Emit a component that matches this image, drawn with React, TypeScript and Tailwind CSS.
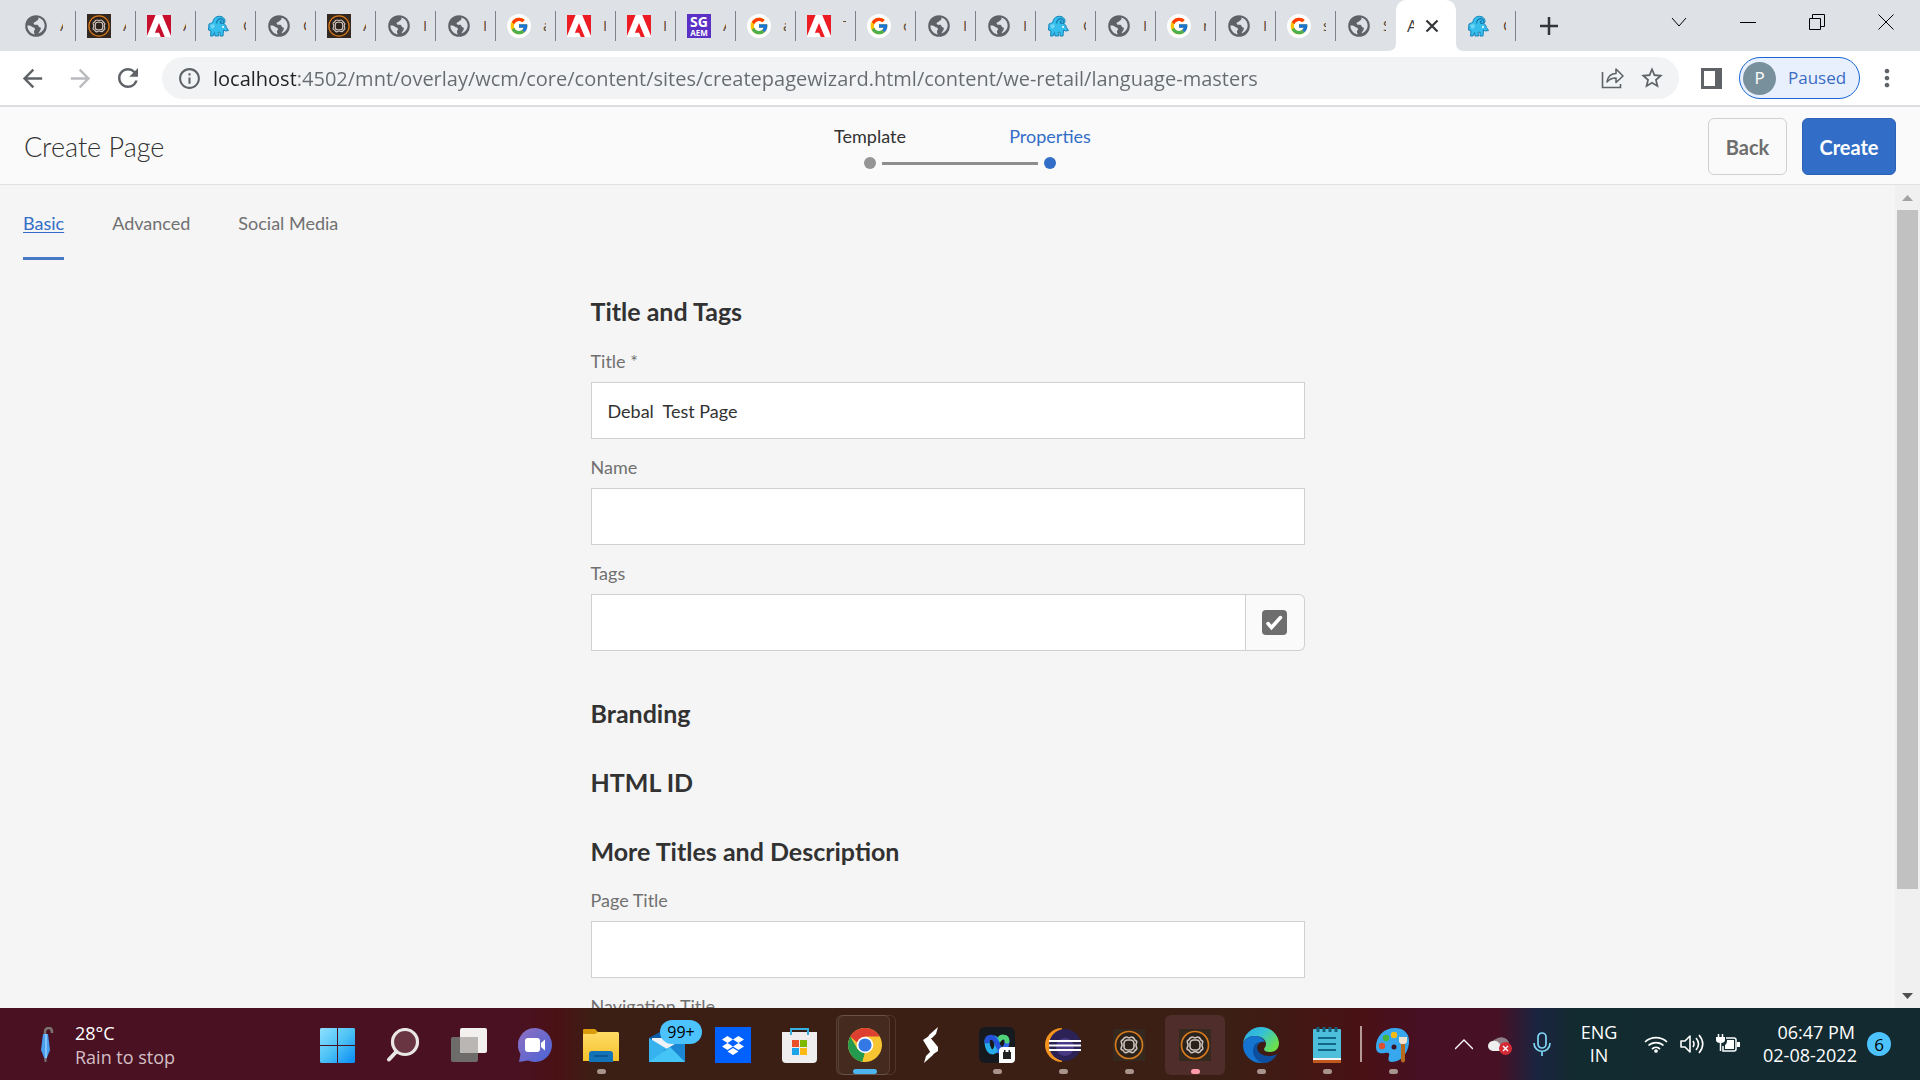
import React, { useState } from "react";
import { FcGoogle } from "react-icons/fc";
import { MdArrowBack, MdArrowForward, MdRefresh, MdInfoOutline, MdStarBorder, MdMoreVert } from "react-icons/md";

const Globe = () => (
  <svg viewBox="0 0 24 24" className="size-6">
    <circle cx="12" cy="12" r="10.800" fill="#5f6368" />
    <path
      d="M14 3.600c1 1.200.6 2.400-.8 2.800-1.300.4-1.400 1.600-2.700 1.900-1.200.3-1 1.700-.2 2.100 1 .5 2.600-.1 3.600.6 1 .8.4 2.100 1.800 2.300 1.500.2 1.300 1.700.6 2.900-.6 1.100-1.500 1.600-1.700 3.200 4-1.400 6.300-4.700 6-8.300-.2-3.700-2.800-6.600-6.600-7.500z"
      fill="#dee1e6"
    />
    <path d="M3.400 11.600c1.700-.3 3.500.2 4.600 1.200.9.900 2.600.7 2.900 2 .3 1.400-1 1.700-1 3 0 .9.600 1.400.7 2.600-4.200-.6-7.200-4.300-7.200-8.800z" fill="#dee1e6" />
  </svg>
);

const AdobeMark = ({ color }: { color: string }) => (
  <svg viewBox="0 0 24 24" className="size-6">
    <rect width="24" height="22" y="1" fill="#fff" />
    <path d="M0 1h8.6L0 22zM15.2 1H24v21zM12 9l5.8 14h-4l-1.700-4.300H7.900z" fill={color} />
  </svg>
);

const Knot = () => (
  <svg viewBox="0 0 32 32" className="size-full">
    <rect width="32" height="32" fill="#35291f" />
    <circle cx="16" cy="16" r="13.500" fill="#2b211b" stroke="#d5791d" strokeWidth="1.700" />
    <g fill="none" stroke="#cfc5be" strokeWidth="1.600">
      <rect x="11" y="11" width="10" height="10" rx="3.500" />
      <path d="M12 8.500c2-1.500 2.500.5 4 .5s2-2 4-.5 1 2 2.500 3 2 .5 1 2.500-1 1.500 0 4 .5 2-1 3-.5 2-2.500 2.500-2.500-1-4-1-2 2-4 1-1-2-2.500-2.500-2-1-1-3 1-1.500 0-4-.5-2 1-3 .5-1.500 2.500-2.500z" />
    </g>
  </svg>
);

const Elephant = () => (
  <svg viewBox="0 0 24 24" className="size-6">
    <path
      d="M2 10c2-1 3-1 4-2 0-4 4-6.500 8-5.500s5 5 3 7c1 1 2 2 2.500 4l2 3-3 .5-2-1-.5 6h-3v-4l-2 .5.500 3.500h-3.500l-.5-3.500L6 22H3.500l.5-5-2.500-1z"
      fill="#35bdec"
      stroke="#1684b8"
      strokeWidth="1"
      strokeLinejoin="round"
    />
    <path d="M9.500 9.500c0-3.500 3-5.500 5.500-4.500s2.500 4.500 0 4.500-2-3 0-2.500" fill="none" stroke="#1779ad" strokeWidth="1.200" />
    <circle cx="16" cy="13" r="1" fill="#fff" />
    <path d="M3 11l4-1 1 3-3 2z" fill="#6fd6f5" />
  </svg>
);

type Kind = "globe" | "aem" | "adobeDark" | "adobe" | "elephant" | "google" | "sg";

const Favicon = ({ kind }: { kind: Kind }) => {
  switch (kind) {
    case "globe":
      return <Globe />;
    case "aem":
      return (
        <span className="size-6">
          <Knot />
        </span>
      );
    case "adobeDark":
      return <AdobeMark color="#c8102e" />;
    case "adobe":
      return <AdobeMark color="#ed1c24" />;
    case "elephant":
      return <Elephant />;
    case "google":
      return (
        <span className="flex size-6 items-center justify-center rounded-full bg-white">
          <FcGoogle className="size-5" />
        </span>
      );
    case "sg":
      return (
        <span className="flex size-6 flex-col items-center bg-[#5b30c4] font-['Noto_Sans',sans-serif] font-bold text-white">
          <span className="text-[14px] leading-[15px]">SG</span>
          <span className="text-[8px] leading-[8px]">AEM</span>
        </span>
      );
  }
};

const tabs: [Kind, string][] = [
  ["globe", "A"],
  ["aem", "A"],
  ["adobeDark", "A"],
  ["elephant", "C"],
  ["globe", "C"],
  ["aem", "A"],
  ["globe", "I"],
  ["globe", "I"],
  ["google", "a"],
  ["adobe", "I"],
  ["adobe", "I"],
  ["sg", "A"],
  ["google", "a"],
  ["adobe", "T"],
  ["google", "c"],
  ["globe", "I"],
  ["globe", "I"],
  ["elephant", "C"],
  ["globe", "I"],
  ["google", "r"],
  ["globe", "I"],
  ["google", "s"],
  ["globe", "S"],
];

const Tab = ({ kind, text, first, last }: { kind: Kind; text: string; first?: boolean; last?: boolean }) => (
  <button className={`flex h-[51px] shrink-0 items-center ${first ? "w-[76px] pl-6" : "w-[60px] pl-[11px]"}`}>
    <Favicon kind={kind} />
    <span className="ml-3 w-[3px] overflow-hidden text-left text-[15px] text-[#5a4632]">{text}</span>
    {!last && <span className="ml-auto h-[30px] w-px bg-[#80848a]" />}
  </button>
);

const TabStrip = () => (
  <div className="flex h-[51px] bg-[#dee1e6]">
    {tabs.map(([kind, text], i) => (
      <Tab key={i} kind={kind} text={text} first={i === 0} last={i === tabs.length - 1} />
    ))}
    <button className="relative flex h-[51px] w-[60px] shrink-0 items-center rounded-t-[10px] bg-white pl-[11px]">
      <svg viewBox="0 0 8 8" className="absolute bottom-0 -left-2 size-2" fill="#fff">
        <path d="M8 0v8H0q8 0 8-8z" />
      </svg>
      <svg viewBox="0 0 8 8" className="absolute -right-2 bottom-0 size-2" fill="#fff">
        <path d="M0 0v8h8Q0 8 0 0z" />
      </svg>
      <span className="w-[7px] overflow-hidden text-[17px] text-[#3c4043]">A</span>
      <svg viewBox="0 0 14 14" className="ml-[11px] size-[14px]" stroke="#333639" strokeWidth="2.200">
        <path d="M1.500 1.500l11 11M12.500 1.500l-11 11" />
      </svg>
    </button>
    <Tab kind="elephant" text="C" />
    <button aria-label="New tab" className="flex w-[66px] shrink-0 items-center justify-center">
      <svg viewBox="0 0 18 18" className="size-[18px]" stroke="#333639" strokeWidth="2.500">
        <path d="M9 0v18M0 9h18" />
      </svg>
    </button>
    <div className="ml-auto flex h-[43px] text-black">
      <button aria-label="Search tabs" className="flex w-[68px] items-center justify-center">
        <svg viewBox="0 0 16 16" className="size-4" fill="none" stroke="currentColor" strokeWidth="1">
          <path d="M1 4l7 8 7-8" />
        </svg>
      </button>
      <button aria-label="Minimize" className="flex w-[69px] items-center justify-center">
        <svg viewBox="0 0 16 16" className="size-4" stroke="currentColor">
          <path d="M0 8.500h16" />
        </svg>
      </button>
      <button aria-label="Restore" className="flex w-[69px] items-center justify-center">
        <svg viewBox="0 0 16 16" className="size-4" fill="none" stroke="currentColor">
          <path d="M.5 4.500h11v11H.5zM3.500 4V.5h12v12H12" />
        </svg>
      </button>
      <button aria-label="Close" className="flex w-[69px] items-center justify-center">
        <svg viewBox="0 0 16 16" className="size-4" stroke="currentColor" strokeWidth="1">
          <path d="M.5.5l15 15M15.500.5l-15 15" />
        </svg>
      </button>
    </div>
  </div>
);

const Toolbar = () => (
  <div className="flex h-[56px] items-center border-b-2 border-[#dadce0] bg-white pl-2 text-[#5f6368]">
    <button aria-label="Back in history" className="flex w-12 justify-center">
      <MdArrowBack className="size-[29px]" />
    </button>
    <button aria-label="Forward" className="flex w-12 justify-center text-[#b9bbbe]">
      <MdArrowForward className="size-[29px]" />
    </button>
    <button aria-label="Reload" className="flex w-12 justify-center">
      <MdRefresh className="size-[30px]" />
    </button>
    <div className="ml-[10px] flex h-[42px] flex-1 items-center rounded-full bg-[#f1f3f4] pr-3">
      <button aria-label="Site information" className="mr-[11px] ml-[15px] flex">
        <MdInfoOutline className="size-[25px]" />
      </button>
      <input
        aria-label="Address"
        defaultValue="localhost:4502/mnt/overlay/wcm/core/content/sites/createpagewizard.html/content/we-retail/language-masters"
        className="h-[42px] min-w-0 flex-1 bg-linear-to-r from-[#202124] from-[83px] to-[#676b70] to-[83px] bg-clip-text text-[20px] text-transparent outline-none"
      />
      <button aria-label="Share" className="flex w-12 justify-center">
        <svg viewBox="0 0 24 24" className="size-6" fill="none" stroke="currentColor" strokeWidth="1.600">
          <path d="M1.500 6v15.500h18V18" />
          <path d="M6 16c1-6 4-8.500 9-8.500V3l7 7-7 6.500V12c-4 0-6.500 1-9 4z" strokeLinejoin="round" />
        </svg>
      </button>
      <button aria-label="Bookmark" className="flex w-[30px] justify-center">
        <MdStarBorder className="size-[26px]" />
      </button>
    </div>
    <button aria-label="Side panel" className="ml-[22px] flex">
      <svg viewBox="0 0 21 21" className="size-[21px]">
        <path d="M0 0h21v21H0zM3 3v15h11V3z" fill="currentColor" fillRule="evenodd" />
      </svg>
    </button>
    <button className="ml-[17px] flex h-[42px] w-[121px] items-center rounded-full border border-[#1967d2] bg-[#e8f0fe] pl-[3px] text-[#3a6cc4]">
      <span className="flex size-[33px] items-center justify-center rounded-full bg-[#78909c] text-[17px] text-white">P</span>
      <span className="ml-3 text-[17px]">Paused</span>
    </button>
    <button aria-label="Menu" className="mr-[19px] ml-[13px] flex w-7 justify-center">
      <MdMoreVert className="size-[30px]" />
    </button>
  </div>
);

const WizardHeader = () => (
  <header className="relative flex h-[78px] items-center justify-between border-b border-[#e1e1e1] bg-[#fafafa] pt-[2px] pr-6 pl-6">
    <h1 className="text-[27px] leading-9 font-light text-[#323232]">Create Page</h1>
    <div className="absolute inset-x-0 top-[17px] flex flex-col items-center text-[18px] leading-6 text-[#323232]">
      <ol className="grid w-[360px] grid-cols-2 text-center">
        <li>Template</li>
        <li className="text-[#326ec8]">Properties</li>
      </ol>
      <div className="mt-[9px] flex items-center gap-[6px]">
        <span className="size-3 rounded-full bg-[#959595]" />
        <span className="h-[3px] w-[156px] bg-[#8e8e8e]" />
        <span className="size-3 rounded-full bg-[#326ec8]" />
      </div>
    </div>
    <div className="relative flex gap-[15px] text-[20px] font-bold">
      <button className="h-[57px] w-[79px] rounded-md border border-[#d0d0d0] text-[#6e6e6e]">Back</button>
      <button className="h-[57px] w-[94px] rounded-md border border-[#2c62b5] bg-[#326ec8] text-white">Create</button>
    </div>
  </header>
);

const Field = ({ id, label, value, children }: { id: string; label: string; value?: string; children?: React.ReactNode }) => (
  <div className="flex flex-col">
    <label htmlFor={id} className="mb-[9px] text-[18px] leading-6 text-[#707070]">
      {label}
    </label>
    <div className="flex">
      <input
        id={id}
        defaultValue={value}
        className="h-[57px] min-w-0 flex-1 border border-[#d0d0d0] bg-white px-4 text-[18px] text-[#323232] outline-none"
      />
      {children}
    </div>
  </div>
);

const Heading = ({ children }: { children: React.ReactNode }) => (
  <h2 className="text-[25px] leading-8 font-bold text-[#323232]">{children}</h2>
);

const Scrollbar = () => (
  <div className="flex w-[25px] shrink-0 flex-col items-center bg-[#f0f0f0]">
    <svg viewBox="0 0 11 6" className="mt-[10px] h-[6px] w-[11px]" fill="#a3a3a3">
      <path d="M5.500 0L11 6H0z" />
    </svg>
    <span className="mt-[9px] h-[679px] w-[21px] bg-[#c1c1c1]" />
    <svg viewBox="0 0 11 6" className="mt-auto mb-[9px] h-[6px] w-[11px]" fill="#505050">
      <path d="M5.500 6L11 0H0z" />
    </svg>
  </div>
);

const PageForm = () => {
  const [active, setActive] = useState("Basic");
  return (
    <main className="flex min-h-0 flex-1 bg-[#f5f5f5]">
      <div className="min-w-0 flex-1 overflow-hidden">
        <nav className="flex gap-12 pl-[23px] text-[18px]">
          {["Basic", "Advanced", "Social Media"].map((t) => (
            <button
              key={t}
              onClick={() => setActive(t)}
              className={`h-[75px] border-b-3 pt-[5px] ${t === active ? "border-[#4678c3] text-[#326ec8] underline underline-offset-2" : "border-transparent text-[#707070]"}`}
            >
              {t}
            </button>
          ))}
        </nav>
        <form className="mx-auto flex max-w-[714px] flex-col pt-[35px]">
          <Heading>Title and Tags</Heading>
          <div className="mt-[22px] flex flex-col gap-4">
            <Field id="title" label="Title *" value="Debal  Test Page" />
            <Field id="name" label="Name" />
            <Field id="tags" label="Tags">
              <button type="button" aria-label="Select tags" className="flex h-[57px] w-[59px] items-center justify-center rounded-r-md border border-l-0 border-[#d0d0d0] bg-[#fafafa]">
                <svg viewBox="0 0 25 25" className="size-[25px]">
                  <rect width="25" height="25" rx="4" fill="#6e6e6e" />
                  <path d="M6 13.500l3.500 4 9-10" fill="none" stroke="#fff" strokeWidth="3.500" strokeLinecap="round" />
                </svg>
              </button>
            </Field>
          </div>
          <div className="mt-[46px] mb-[21px] flex flex-col gap-[37px]">
            <Heading>Branding</Heading>
            <Heading>HTML ID</Heading>
            <Heading>More Titles and Description</Heading>
          </div>
          <div className="flex flex-col gap-4">
            <Field id="page-title" label="Page Title" />
            <Field id="navigation-title" label="Navigation Title" />
          </div>
        </form>
      </div>
      <Scrollbar />
    </main>
  );
};

const Windows = () => (
  <svg viewBox="0 0 35 35" className="size-[35px]">
    <defs>
      <linearGradient id="win" x1="0" y1="0" x2="35" y2="35" gradientUnits="userSpaceOnUse">
        <stop offset="0" stopColor="#8fe0ff" />
        <stop offset=".5" stopColor="#4cc2f5" />
        <stop offset="1" stopColor="#0a8cf5" />
      </linearGradient>
    </defs>
    <path d="M1 0h16v17H0V1zM18 0h16l1 1v16H18zM0 18h17v17H1l-1-1zM18 18h17v16l-1 1H18z" fill="url(#win)" />
  </svg>
);

const Search = () => (
  <svg viewBox="0 0 34 34" className="size-[34px]" fill="none" stroke="#e9e6e6" strokeWidth="3.200" strokeLinecap="round">
    <path d="M11 23l-8 8.500" strokeWidth="4" />
    <circle cx="19" cy="14" r="12.500" fill="#6a3542" />
  </svg>
);

const TaskView = () => (
  <svg viewBox="0 0 36 34" className="h-[34px] w-9">
    <rect y="9" width="27" height="25" rx="2" fill="#6e6c6b" />
    <rect x="9" width="27" height="25" rx="2" fill="#f3f1f0" />
    <path d="M9 9h18v16H11l-2-2z" fill="#b9b6b4" />
  </svg>
);

const Chat = () => (
  <svg viewBox="0 0 34 34" className="size-[34px]">
    <defs>
      <linearGradient id="chat" x1="0" y1="0" x2="1" y2="1">
        <stop offset="0" stopColor="#8f6fc0" />
        <stop offset="1" stopColor="#4a64d8" />
      </linearGradient>
    </defs>
    <path d="M17 0a17 17 0 11-7 32.500L1 34l1.500-8A17 17 0 0117 0z" fill="url(#chat)" />
    <rect x="7" y="10" width="15" height="14" rx="3" fill="#fff" />
    <path d="M23 15l4-3.500v11L23 19z" fill="#fff" />
  </svg>
);

const Folder = () => (
  <svg viewBox="0 0 36 34" className="h-[34px] w-9">
    <defs>
      <linearGradient id="fold" x1="0" y1="0" x2="0" y2="1">
        <stop offset="0" stopColor="#ffdb66" />
        <stop offset="1" stopColor="#f5c22b" />
      </linearGradient>
    </defs>
    <path d="M0 2q0-1 1-1h11l4 4v4H0z" fill="#d99a0b" />
    <path d="M0 6h12l3-2h20l1 1v28H0z" fill="url(#fold)" />
    <path d="M6 34v-8q0-3 3-3h18q3 0 3 3v8z" fill="#1273b8" />
    <path d="M11 28h14" stroke="#0b4f86" strokeWidth="1.500" />
  </svg>
);

const Mail = () => (
  <span className="relative flex">
    <svg viewBox="0 0 36 34" className="h-[34px] w-9">
      <path d="M0 10L18 0l18 10v8H0z" fill="#0d5ea8" />
      <path d="M3 10h30v8L18 24 3 16z" fill="#eef2f5" />
      <path d="M0 10l36 22v2H0z" fill="#36b3ee" />
      <path d="M36 10L14 23l22 11z" fill="#1b86d2" />
      <path d="M0 34l21-15 15 15z" fill="#45c4f6" />
    </svg>
    <span className="absolute -top-2 left-[11px] flex h-6 w-[42px] items-center justify-center rounded-full bg-[#4cc2ff] text-[16px] text-black">99+</span>
  </span>
);

const Dropbox = () => (
  <svg viewBox="0 0 36 36" className="size-9">
    <rect width="36" height="36" fill="#0061fe" />
    <path d="M12.500 9l5.500 3.500-5.500 3.500L7 12.500zM23.500 9l5.500 3.500-5.500 3.500-5.500-3.500zM12.500 16l5.500 3.500-5.500 3.500L7 19.500zM23.500 16l5.500 3.500-5.500 3.500-5.500-3.500zM18 21l5.500 3.500L18 28l-5.500-3.500z" fill="#fff" />
  </svg>
);

const Store = () => (
  <svg viewBox="0 0 35 35" className="size-[35px]">
    <path d="M0 4h35v27q0 4-4 4H4q-4 0-4-4z" fill="#efedee" />
    <path d="M9 7V1h17v6" fill="none" stroke="#35b0e0" strokeWidth="2" />
    <path d="M10 12h7v7h-7z" fill="#e94f2b" />
    <path d="M18 12h7v7h-7z" fill="#7eb900" />
    <path d="M10 20h7v7h-7z" fill="#1fa3e8" />
    <path d="M18 20h7v7h-7z" fill="#fcb813" />
  </svg>
);

const Chrome = () => (
  <svg viewBox="0 0 34 34" className="size-[34px]">
    <circle cx="17" cy="17" r="17" fill="#f7c432" />
    <path d="M17 17L2.300 8.500A17 17 0 0131.700 8.500H17z" fill="#dd3f31" />
    <path d="M2.300 8.500l7.400 12.700L17 25l-2.500 8.800A17 17 0 012.300 8.500z" fill="#249a4e" />
    <path d="M2.300 8.500h29.400H17l-8 6z" fill="#dd3f31" />
    <path d="M17 33.900l7.500-12.600V17L17 25l-2.600 8.700z" fill="#f7c432" />
    <circle cx="17" cy="17" r="8.300" fill="#fff" />
    <circle cx="17" cy="17" r="6.600" fill="#3478e6" />
  </svg>
);

const SLogo = () => (
  <svg viewBox="0 0 20 36" className="h-9 w-5" fill="#fff">
    <path d="M17 0L8 8 7 12l4-1L15 7zM3 36l9-8 1-4-4 1-4 4z" />
    <path d="M2 13l6-4 9 11v4l-6 4z" />
  </svg>
);

const Webex = () => (
  <svg viewBox="0 0 36 36" className="size-9">
    <rect width="36" height="36" rx="6" fill="#161a1e" />
    <g fill="none" strokeWidth="5" strokeLinecap="round">
      <path d="M17 23c6 3 11-3 11-8" stroke="#2f66e8" />
      <path d="M20 13c2-4 8-4 8 1" stroke="#4fd27a" />
      <path d="M8 14c0 8 4 13 7.500 10s3-12 0-13" stroke="#27aee8" />
      <path d="M8 14c0-4 5-5 7.500-2s3 8 6 10" stroke="#2452d8" />
    </g>
    <path d="M20 36V24q0-4 4-4h12v12q0 4-4 4z" fill="#fff" />
    <path d="M24 25h8v7h-8zM25 23h1.500v2H25zM29.500 23H31v2h-1.500z" fill="#222" />
  </svg>
);

const Eclipse = () => (
  <svg viewBox="0 0 36 34" className="h-[34px] w-9">
    <path d="M17 0A17 17 0 0017 34L17 30A14 14 0 0117 4z" fill="#f4941e" />
    <circle cx="20" cy="17" r="16" fill="#2c2255" />
    <circle cx="20" cy="19" r="9" fill="#4a3a86" />
    <path d="M4 13h32M4 17.500h32M4 22h32" stroke="#fff" strokeWidth="1.800" />
  </svg>
);

const Edge = () => (
  <svg viewBox="0 0 36 36" className="size-9">
    <defs>
      <linearGradient id="edge" x1="0" y1="0" x2="1" y2=".6">
        <stop offset="0" stopColor="#2ba8e0" />
        <stop offset=".5" stopColor="#35c1d8" />
        <stop offset="1" stopColor="#6be04c" />
      </linearGradient>
    </defs>
    <path d="M18 0a18 18 0 0118 16c0 6-4 9-9 9-4 0-6-1-6-3 0-1 2-2 2-5 0-4-4-8-11-8C6 9 1 12 0 17A18 18 0 0118 0z" fill="url(#edge)" />
    <path d="M0 18c1-6 6-9 12-9 5 0 9 3 10 6-5-1-8 2-8 6 0 6 6 12 13 11-3 3-6 4-9 4A18 18 0 010 18z" fill="#1474cf" />
    <path d="M14 20c0 6 6 9 12 9 4 0 6-1 8-2-3 6-8 9-14 9C12 34 8 26 11 19c2-4 6-5 10-4-4-1-7 1-7 5z" fill="#0d4f9e" />
  </svg>
);

const Notepad = () => (
  <svg viewBox="0 0 28 36" className="h-9 w-7">
    <rect y="2" width="28" height="34" rx="1" fill="#4dbfdb" />
    <path d="M0 31h28v2H0z" fill="#f4f4f4" />
    <path d="M0 33h28v3H0z" fill="#c05a1c" />
    <path d="M5 0v5M11 0v5M17 0v5M23 0v5" stroke="#14607c" strokeWidth="3" />
    <path d="M5 11h18M5 17h18M5 23h18" stroke="#0e6a86" strokeWidth="1.800" />
  </svg>
);

const Paint = () => (
  <svg viewBox="0 0 36 36" className="size-9">
    <path d="M20 1c9 0 15 6 14 15-1 10-8 19-17 19-4 0-4-3-3-6s-1-4-4-3c-5 1-9 0-9-6C1 9 9 1 20 1z" fill="#37a8ee" />
    <circle cx="7" cy="19" r="3.200" fill="#e0502c" />
    <circle cx="11" cy="11" r="3.200" fill="#45b43a" />
    <circle cx="19" cy="8" r="3.200" fill="#f7b916" />
    <circle cx="19" cy="20" r="2.500" fill="#3b1324" />
    <path d="M26 17h4v17q-2 3-4 0z" fill="#b86a1c" />
    <path d="M24 10h8v5l-2 2h-4l-2-2z" fill="#efe3cf" />
  </svg>
);

type TaskbarApp = { name: string; icon: React.ReactNode; state?: "open" | "chrome" | "alert" };

const apps: TaskbarApp[] = [
  { name: "Start", icon: <Windows /> },
  { name: "Search", icon: <Search /> },
  { name: "Task view", icon: <TaskView /> },
  { name: "Chat", icon: <Chat /> },
  { name: "File Explorer", icon: <Folder />, state: "open" },
  { name: "Mail", icon: <Mail /> },
  { name: "Dropbox", icon: <Dropbox /> },
  { name: "Store", icon: <Store /> },
  { name: "Chrome", icon: <Chrome />, state: "chrome" },
  { name: "S", icon: <SLogo /> },
  { name: "Webex", icon: <Webex />, state: "open" },
  { name: "Eclipse", icon: <Eclipse />, state: "open" },
  { name: "Author", icon: <span className="size-8"><Knot /></span>, state: "open" },
  { name: "Publish", icon: <span className="size-8"><Knot /></span>, state: "alert" },
  { name: "Edge", icon: <Edge />, state: "open" },
  { name: "Notepad", icon: <Notepad />, state: "open" },
  { name: "Paint", icon: <Paint />, state: "open" },
];

const Taskbar = () => (
  <footer className="flex h-[72px] shrink-0 items-center [background-image:linear-gradient(90deg,#4a1122_0%,#4a1122_27%,#4a1115_29%,#3b1f14_31%,#3b1f14_64%,#4a1115_71%,#471024_74%,#471024_78%,#1b2440_80%,#122b30_82%,#132a30_100%)] text-[18px] text-white">
    <button className="flex w-[304px] items-center pt-[2px] text-left">
      <svg viewBox="0 0 14 36" className="ml-10 h-9 w-[14px]">
        <path d="M5 8V5q0-4 4-4 3 0 3 4v1" fill="none" stroke="#7c7270" strokeWidth="2.500" />
        <path d="M3 7h5l2 16-4 10h-1L1 23z" fill="#4a9fee" />
        <path d="M5 7h2v24H5z" fill="#83c3fa" />
        <path d="M5.500 31v4" stroke="#7c7270" strokeWidth="2" />
      </svg>
      <span className="ml-[21px] flex flex-col leading-6">
        <span>28°C</span>
        <span className="text-[#d3bfc5]">Rain to stop</span>
      </span>
    </button>
    {apps.map(({ name, icon, state }) => (
      <React.Fragment key={name}>
        {name === "Paint" && (
          <span className="relative w-0">
            <span className="absolute -top-[18px] left-0 h-9 w-[2px] bg-[#b59a98]" />
          </span>
        )}
        <button aria-label={name} className="relative flex h-[72px] w-[66px] shrink-0 items-center justify-center pt-[2px]">
          {state === "alert" && <span className="absolute inset-x-[3px] top-[7px] bottom-[5px] rounded-md bg-[#7a5060]/30" />}
          {state === "chrome" && (
            <>
              <span className="absolute top-[7px] right-[2px] bottom-[5px] w-[58px] rounded-md border border-white/10" />
              <span className="absolute top-[7px] right-2 bottom-[5px] w-[54px] rounded-md border border-white/10 bg-white/5" />
            </>
          )}
          <span className="relative flex">{icon}</span>
          {state === "open" && <span className="absolute bottom-[6px] h-[5px] w-[9px] rounded-full bg-[#a8948d]" />}
          {state === "alert" && <span className="absolute bottom-[6px] h-[5px] w-[9px] rounded-full bg-[#ff9aa8]" />}
          {state === "chrome" && <span className="absolute bottom-[6px] h-[5px] w-6 rounded-full bg-[#4cb5f0]" />}
        </button>
      </React.Fragment>
    ))}
    <div className="ml-auto flex items-center pr-[29px] leading-[23px]">
      <button aria-label="Hidden icons" className="flex w-9 justify-center">
        <svg viewBox="0 0 18 18" className="size-[18px]" fill="none" stroke="#fff" strokeWidth="1.400">
          <path d="M0 14l9-9 9 9" />
        </svg>
      </button>
      <button aria-label="OneDrive" className="flex w-9 justify-center">
        <svg viewBox="0 0 24 22" className="h-[22px] w-6">
          <path d="M5 14a5 5 0 013-8 8 7 0 0113 4l-8 8z" fill="#8f7f87" />
          <path d="M5 18a5 5 0 010-10q4-1 7 3v7z" fill="#eee" />
          <circle cx="17.500" cy="15.500" r="6.500" fill="#d42a35" />
          <path d="M15 13l5 5M20 13l-5 5" stroke="#fff" strokeWidth="1.400" />
        </svg>
      </button>
      <button aria-label="Microphone" className="flex w-12 justify-center">
        <svg viewBox="0 0 18 24" className="h-6 w-[18px]" fill="none" stroke="#7ed6f5" strokeWidth="1.700">
          <rect x="5" y="1" width="8" height="15" rx="4" />
          <path d="M1 11c0 11 16 11 16 0M9 19v5" />
        </svg>
      </button>
      <button className="w-[66px] text-center">
        ENG
        <br />
        IN
      </button>
      <button aria-label="Network, volume and battery" className="ml-3 flex items-center gap-3">
        <svg viewBox="0 0 24 18" className="h-[18px] w-6" fill="none" stroke="#fff" strokeWidth="1.700">
          <path d="M1 7a16 16 0 0122 0M4.500 10.500a11 11 0 0115 0M8 14a6 6 0 018 0" />
          <circle cx="12" cy="16" r="1" fill="#fff" />
        </svg>
        <svg viewBox="0 0 24 20" className="h-5 w-6" fill="none" stroke="#fff" strokeWidth="1.600">
          <path d="M1 7h4l5-5v16l-5-5H1zM13 7q2 3 0 6M16 4q5 6 0 12M19 1q7.500 9 0 18" strokeLinejoin="round" />
        </svg>
        <svg viewBox="0 0 24 20" className="h-5 w-6" fill="none" stroke="#fff" strokeWidth="1.500">
          <path d="M2.500 0v4M6.500 0v4M4.500 9v8" />
          <path d="M0 3h9v3q0 3-4.500 3T0 6z" fill="#fff" stroke="none" />
          <path d="M10 4h8q2 0 2 2v9q0 2-2 2H7v-5" />
          <path d="M11 6h7v9H9v-4q2-1 2-5zM21 8h3v5h-3z" fill="#fff" stroke="none" />
        </svg>
      </button>
      <button className="ml-[23px] w-[92px] text-right whitespace-nowrap">
        06:47 PM
        <br />
        02-08-2022
      </button>
      <span className="ml-3 flex size-6 items-center justify-center rounded-full bg-[#4cc2ff] text-[17px] text-black">6</span>
    </div>
  </footer>
);

export default function App() {
  return (
    <div className="flex h-screen flex-col overflow-hidden font-['Open_Sans',sans-serif]">
      <TabStrip />
      <Toolbar />
      <div className="flex min-h-0 flex-1 flex-col font-['Lato',sans-serif]">
        <WizardHeader />
        <PageForm />
      </div>
      <Taskbar />
    </div>
  );
}
